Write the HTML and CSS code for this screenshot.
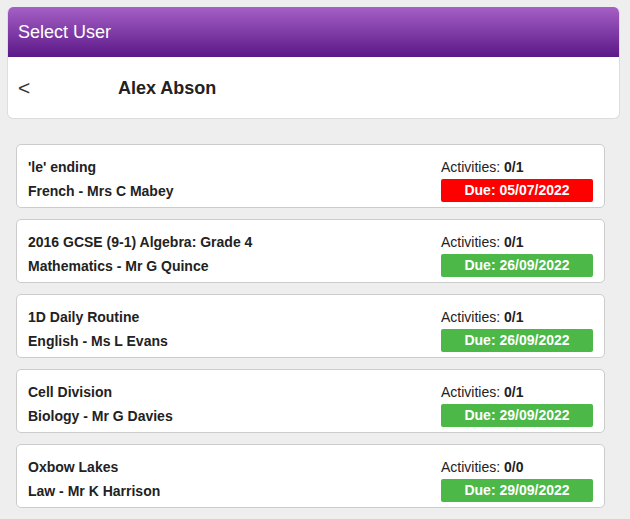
FILE: index.html
```html
<!DOCTYPE html>
<html lang="en">
<head>
    <meta charset="UTF-8">
    <meta name="viewport" content="width=device-width, initial-scale=1.0">
    <title>Select User</title>
    <link rel="stylesheet" href="styles.css">
</head>
<body>
    <!-- Cabecera -->
    <div class="panel">
        <header>Select User</header>
        <div class="user-bar">
            <span class="back">&lt;</span>
            <span class="user-name">Alex Abson</span>
        </div>
    </div>

    <!-- Lista de tareas -->
    <main class="task-list">
        <div class="task">
            <div class="task-title">'le' ending</div>
            <div class="task-count">Activities: <b>0/1</b></div>
            <div class="task-subject">French - Mrs C Mabey</div>
            <div class="due late">Due: 05/07/2022</div>
        </div>
        <div class="task">
            <div class="task-title">2016 GCSE (9-1) Algebra: Grade 4</div>
            <div class="task-count">Activities: <b>0/1</b></div>
            <div class="task-subject">Mathematics - Mr G Quince</div>
            <div class="due">Due: 26/09/2022</div>
        </div>
        <div class="task">
            <div class="task-title">1D Daily Routine</div>
            <div class="task-count">Activities: <b>0/1</b></div>
            <div class="task-subject">English - Ms L Evans</div>
            <div class="due">Due: 26/09/2022</div>
        </div>
        <div class="task">
            <div class="task-title">Cell Division</div>
            <div class="task-count">Activities: <b>0/1</b></div>
            <div class="task-subject">Biology - Mr G Davies</div>
            <div class="due">Due: 29/09/2022</div>
        </div>
        <div class="task">
            <div class="task-title">Oxbow Lakes</div>
            <div class="task-count">Activities: <b>0/0</b></div>
            <div class="task-subject">Law - Mr K Harrison</div>
            <div class="due">Due: 29/09/2022</div>
        </div>
    </main>
</body>
</html>
```

FILE: styles.css
```css
body {
    font-family: "Liberation Sans", Arial, sans-serif;
    margin: 0;
    padding: 7px 10px 0 7px;
    background-color: #eeeeee;
    color: #222222;
}
.panel {
    background-color: #ffffff;
    border: 1px solid #dddddd;
    border-top: none;
    border-radius: 6px;
    overflow: hidden;
}
header {
    height: 50px;
    box-sizing: border-box;
    padding: 15px 10px 0;
    font-size: 18px;
    color: #ffffff;
    background: linear-gradient(to bottom, #a660c6, #5b1887);
}
.user-bar {
    height: 61px;
    display: flex;
    align-items: center;
    padding-left: 10px;
}
.back {
    font-size: 21px;
    width: 100px;
    color: #333333;
}
.user-name {
    font-size: 18px;
    font-weight: bold;
    padding-top: 2px;
}
.task-list {
    padding: 25px 15px 0 9px;
}
.task {
    display: grid;
    grid-template-columns: 1fr 152px;
    grid-template-rows: 20px 23px;
    row-gap: 2px;
    align-items: center;
    background-color: #ffffff;
    border: 1px solid #cccccc;
    border-radius: 5px;
    padding: 12px 11px 5px 11px;
    margin-bottom: 11px;
    font-size: 14px;
}
.task-title,
.task-subject {
    font-weight: bold;
}
.due {
    height: 23px;
    line-height: 23px;
    text-align: center;
    color: #ffffff;
    font-weight: bold;
    border-radius: 2px;
    background-color: #4cb848;
}
.due.late {
    background-color: #ff0000;
}
```
